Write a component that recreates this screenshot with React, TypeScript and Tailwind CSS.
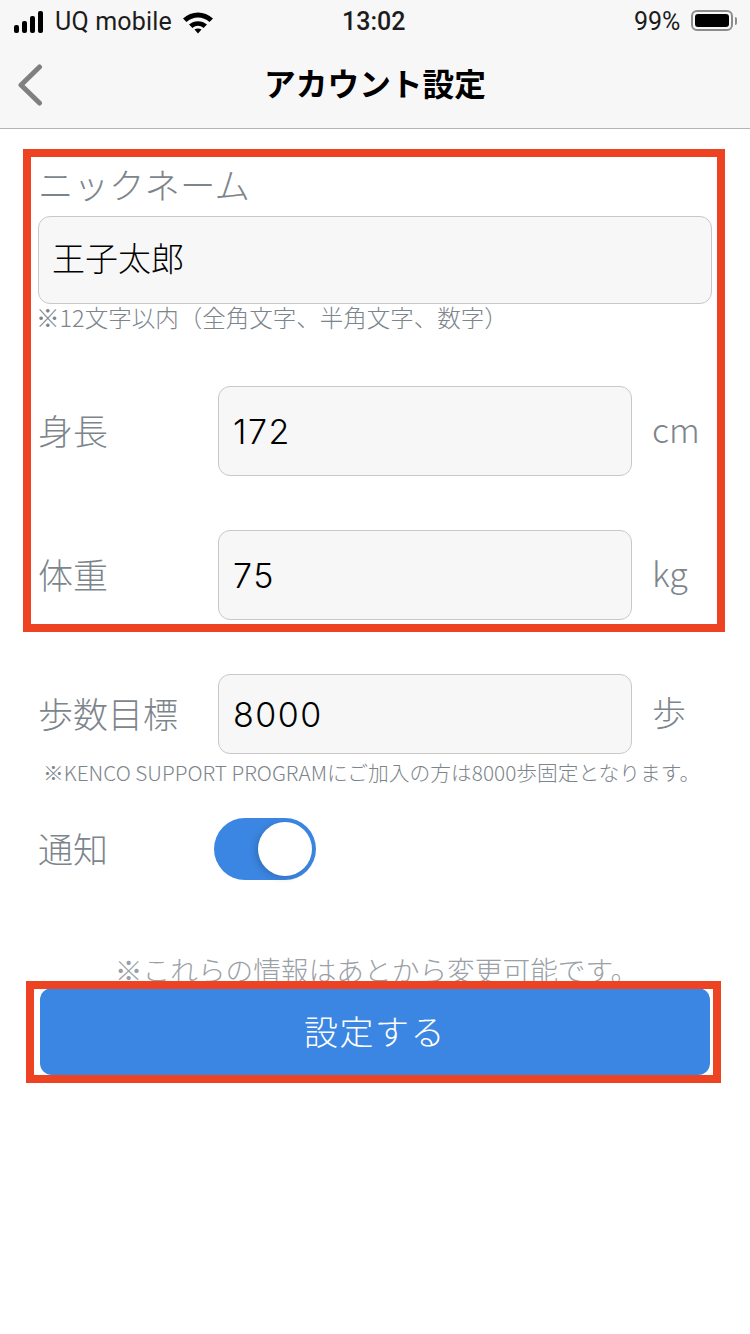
const jp = 'font-["Noto_Sans_CJK_JP","Noto_Sans",sans-serif]';

function Field({ label, value, unit, height, rowClass }: { label: string; value: string; unit: string; height: string; rowClass: string }) {
  return (
    <div className={`flex items-center ${rowClass}`}>
      <span className="w-[180px] whitespace-nowrap pb-[4px] text-[35px] font-light leading-none text-[#7d858c]">{label}</span>
      <div className={`flex w-[414px] items-center rounded-[12px] border border-[#c8c8c8] bg-[#f7f7f7] pl-[14px] font-['Inter',sans-serif] text-[34px] font-light tracking-[1.5px] text-black ${height}`}>
        {value}
      </div>
      <span className="ml-[20px] pb-[4px] text-[34px] font-light leading-none text-[#7d858c]">{unit}</span>
    </div>
  );
}

export default function App() {
  return (
    <div className={`relative h-[1334px] w-[750px] overflow-hidden bg-white ${jp}`}>
      <header className="h-[129px] border-b border-[#b4b4b4] bg-[#f7f7f7]">
        <div className="relative flex h-[42px] items-center pl-[14px] pt-[2px] font-['Roboto',sans-serif] text-[25px] text-[#1c1c1c]">
          <div className="flex items-end gap-[3px]">
            <span className="h-[8px] w-[5px] rounded-[2px] bg-black" />
            <span className="h-[12px] w-[5px] rounded-[2px] bg-black" />
            <span className="h-[17px] w-[5px] rounded-[2px] bg-black" />
            <span className="h-[22px] w-[5px] rounded-[2px] bg-black" />
          </div>
          <span className="ml-[12px] tracking-[0.2px]">UQ mobile</span>
          <svg className="ml-[10px]" width="32" height="24" viewBox="0 0 32 24">
            <path d="M1 8.5C9.5 0.5 22.5 0.5 31 8.5L27.5 12C21 6 11 6 4.5 12Z M7 14.5C12 10 20 10 25 14.5L21.5 18C18 15 14 15 10.500 18Z M12.500 19.500C14.500 18 17.500 18 19.500 19.500L16 23.500Z" fill="#000" />
          </svg>
          <span className="absolute left-[342px] font-medium">13:02</span>
          <span className="absolute left-[634px]">99%</span>
          <div className="absolute left-[691px] top-[10px] flex h-[21px] w-[42px] items-center rounded-[6px] border-2 border-[#8c8c8c] p-[2px]">
            <div className="h-full w-full rounded-[3px] bg-black" />
          </div>
          <span className="absolute left-[735px] top-[17px] h-[8px] w-[2px] rounded-r bg-[#8c8c8c]" />
        </div>
        <div className="relative flex h-[86px] items-center justify-center">
          <svg className="absolute left-[17px] top-[22px]" width="26" height="42" viewBox="0 0 26 42" fill="none">
            <path d="M22.500 3L4 21L22.500 39" stroke="#808080" strokeWidth="5" strokeLinecap="round" strokeLinejoin="round" />
          </svg>
          <h1 className="pb-[5px] text-[31.700px] font-bold leading-none text-black">アカウント設定</h1>
        </div>
      </header>

      <main className="flex flex-col px-[38px]">
        <label className="mt-[30px] text-[35.500px] font-light leading-[50px] text-[#7d858c]">ニックネーム</label>
        <div className="mt-[7px] flex h-[88px] w-[674px] items-center rounded-[12px] border border-[#c8c8c8] bg-[#f7f7f7] pb-[4px] pl-[13px] text-[33px] font-light text-black">
          王子太郎
        </div>
        <p className="ml-[-2px] mt-[-1px] whitespace-nowrap text-[23.500px] font-light leading-[28px] text-[#7d858c]">※12文字以内（全角文字、半角文字、数字）</p>
        <Field label="身長" value="172" unit="cm" height="h-[90px]" rowClass="mt-[55px]" />
        <Field label="体重" value="75" unit="kg" height="h-[90px]" rowClass="mt-[54px]" />
        <Field label="歩数目標" value="8000" unit="歩" height="h-[80px]" rowClass="mt-[54px]" />
        <p className="ml-[5px] mt-[5px] whitespace-nowrap text-[20.750px] font-light leading-[26px] text-[#7d858c]">※KENCO SUPPORT PROGRAMにご加入の方は8000歩固定となります。</p>
        <div className="mt-[33px] flex items-center">
          <span className="w-[176px] pb-[4px] text-[35px] font-light leading-none text-[#7d858c]">通知</span>
          <div className="flex h-[62px] w-[102px] items-center justify-end rounded-full bg-[#3b86e3] pr-[4px]">
            <div className="h-[54px] w-[54px] rounded-full bg-white shadow-[-3px_2px_6px_rgba(0,0,0,0.15)]" />
          </div>
        </div>
        <p className="ml-[3px] mt-[73px] whitespace-nowrap text-center text-[27.700px] font-light leading-[32px] text-[#9aa0a6]">※これらの情報はあとから変更可能です。</p>
        <button className="ml-[2px] mt-[3px] h-[87px] w-[670px] rounded-[12px] bg-[#3b86e3] pb-[2px] text-[34px] font-light tracking-[1.500px] text-white">設定する</button>
      </main>

      {/* red annotation boxes */}
      <div className="absolute left-[23px] top-[149px] h-[483px] w-[702px] border-[8px] border-[#ee4323]" />
      <div className="absolute left-[26px] top-[981px] h-[102px] w-[695px] border-[8px] border-[#ee4323]" />
    </div>
  );
}
